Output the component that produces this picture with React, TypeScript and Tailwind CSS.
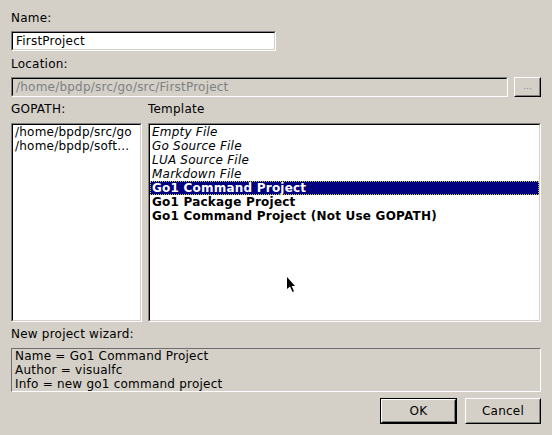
import React from "react";

const Sunken = ({ className = "", inner = "", children }: { className?: string; inner?: string; children?: React.ReactNode }) => (
  <div className={`border border-t-[#808080] border-l-[#808080] border-r-white border-b-white ${className}`}>
    <div className={`h-full w-full border border-t-black border-l-black border-r-[#d4d0c8] border-b-[#d4d0c8] ${inner}`}>{children}</div>
  </div>
);

const Raised = ({ className = "", children }: { className?: string; children?: React.ReactNode }) => (
  <div className={`border border-t-white border-l-white border-r-black border-b-black ${className}`}>
    <div className="h-full w-full border border-t-[#d4d0c8] border-l-[#d4d0c8] border-r-[#808080] border-b-[#808080] flex items-center justify-center">
      {children}
    </div>
  </div>
);

export default function App() {
  const templates: { t: string; kind: "i" | "b" }[] = [
    { t: "Empty File", kind: "i" },
    { t: "Go Source File", kind: "i" },
    { t: "LUA Source File", kind: "i" },
    { t: "Markdown File", kind: "i" },
    { t: "Go1 Command Project", kind: "b" },
    { t: "Go1 Package Project", kind: "b" },
    { t: "Go1 Command Project (Not Use GOPATH)", kind: "b" },
  ];
  return (
    <div className="relative w-[552px] h-[435px] overflow-hidden bg-[#d4d0c8] text-black font-['DejaVu_Sans',sans-serif] text-[12px] leading-[14px] tracking-[0.22px]">
      <div className="flex flex-col pl-[11px] pr-[11px] pt-[11px]">
        <div className="h-[14px]">Name:</div>
        <Sunken className="mt-[6px] w-[265px] h-[20px]" inner="bg-white flex items-center pl-[3px]">
          <span>FirstProject</span>
        </Sunken>
        <div className="h-[14px] mt-[6px]">Location:</div>
        <div className="mt-[6px] flex gap-[6px] h-[20px]">
          <Sunken className="w-[497px] h-[20px]" inner="bg-[#d4d0c8] flex items-center pl-[3px] text-[#808080]">
            <span>/home/bpdp/src/go/src/FirstProject</span>
          </Sunken>
          <Raised className="w-[27px] h-[20px]">
            <span className="text-[9px] leading-[9px] text-[#8a8a9a] tracking-[0px] -mt-[1px]">...</span>
          </Raised>
        </div>
        <div className="mt-[5px] grid grid-cols-[131px_393px] gap-x-[6px]">
          <div className="h-[14px]">GOPATH:</div>
          <div className="h-[14px]">Template</div>
          <Sunken className="mt-[7px] h-[199px]" inner="bg-white pl-[2px] pt-0 overflow-hidden">
            <div className="whitespace-nowrap">/home/bpdp/src/go</div>
            <div className="whitespace-nowrap">/home/bpdp/soft...</div>
          </Sunken>
          <Sunken className="mt-[7px] h-[199px]" inner="bg-white overflow-hidden">
            {templates.map((it, i) =>
              i === 4 ? (
                <div
                  key={i}
                  className="h-[14px] bg-[#000080] text-white font-bold pl-[2px] outline-1 outline-dotted outline-[#c8c850] -outline-offset-1 whitespace-nowrap"
                >
                  {it.t}
                </div>
              ) : (
                <div
                  key={i}
                  className={`h-[14px] pl-[2px] whitespace-nowrap ${it.kind === "i" ? "italic" : "font-bold"}`}
                >
                  {it.t}
                </div>
              )
            )}
          </Sunken>
        </div>
        <div className="h-[14px] mt-[5px]">New project wizard:</div>
        <div className="mt-[7px] h-[44px] w-[530px] border border-t-[#6e6e6e] border-l-[#6e6e6e] border-r-white border-b-white pl-[3px]">
          <div>Name = Go1 Command Project</div>
          <div>Author = visualfc</div>
          <div>Info = new go1 command project</div>
        </div>
        <div className="mt-[6px] flex justify-end gap-[8px]">
          <div className="w-[77px] h-[26px] border border-black">
            <Raised className="h-full w-full">
              <span>OK</span>
            </Raised>
          </div>
          <Raised className="w-[76px] h-[26px]">
            <span>Cancel</span>
          </Raised>
        </div>
      </div>
      <svg className="absolute left-[287px] top-[277px]" width="10" height="16" viewBox="0 0 10 16">
        <path d="M0 0 L0 12 L3 9.5 L5.5 15 L7 14.3 L4.6 9 L8 9 Z" fill="black" />
      </svg>
    </div>
  );
}
